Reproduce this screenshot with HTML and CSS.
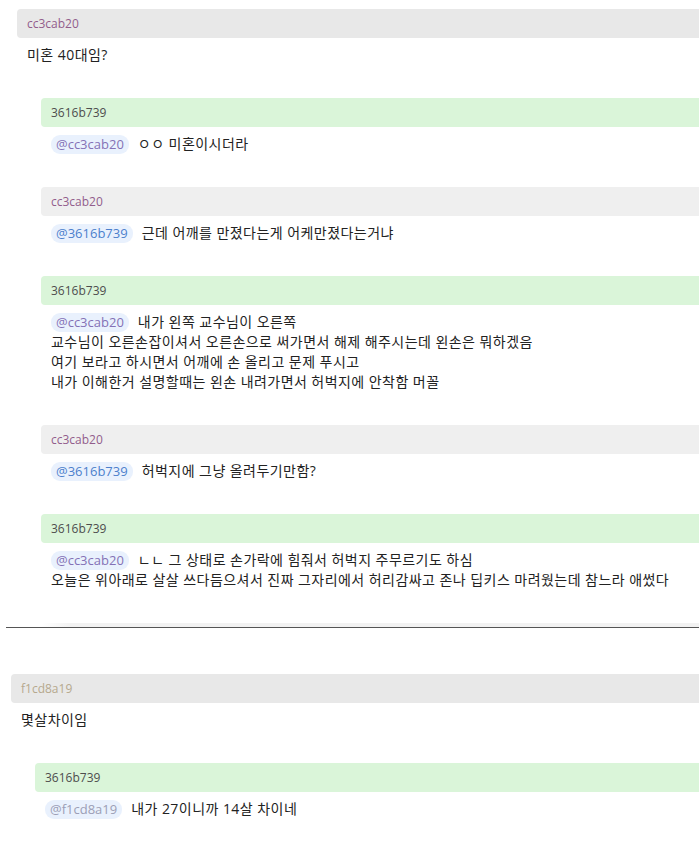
FILE: index.html
```html
<!DOCTYPE html>
<html lang="ko">
<head>
    <meta charset="UTF-8">
    <meta name="viewport" content="width=device-width, initial-scale=1.0">
    <title>댓글</title>
    <link rel="stylesheet" href="styles.css">
</head>
<body>
    <div class="thread thread-cut">
        <div class="comment">
            <div class="comment-head user-c">cc3cab20</div>
            <div class="comment-body">미혼 40대임?</div>
            <div class="replies">
                <div class="comment">
                    <div class="comment-head head-green user-3">3616b739</div>
                    <div class="comment-body"><span class="mention m-c">@cc3cab20</span>ㅇㅇ 미혼이시더라</div>
                </div>
                <div class="comment">
                    <div class="comment-head head-light user-c">cc3cab20</div>
                    <div class="comment-body"><span class="mention m-3">@3616b739</span>근데 어깨를 만졌다는게 어케만졌다는거냐</div>
                </div>
                <div class="comment">
                    <div class="comment-head head-green user-3">3616b739</div>
                    <div class="comment-body"><span class="mention m-c">@cc3cab20</span>내가 왼쪽 교수님이 오른쪽<br>
                        교수님이 오른손잡이셔서 오른손으로 써가면서 해제 해주시는데 왼손은 뭐하겠음<br>
                        여기 보라고 하시면서 어깨에 손 올리고 문제 푸시고<br>
                        내가 이해한거 설명할때는 왼손 내려가면서 허벅지에 안착함 머꼴</div>
                </div>
                <div class="comment">
                    <div class="comment-head head-light user-c">cc3cab20</div>
                    <div class="comment-body"><span class="mention m-3">@3616b739</span>허벅지에 그냥 올려두기만함?</div>
                </div>
                <div class="comment">
                    <div class="comment-head head-green user-3">3616b739</div>
                    <div class="comment-body"><span class="mention m-c">@cc3cab20</span>ㄴㄴ 그 상태로 손가락에 힘줘서 허벅지 주무르기도 하심<br>
                        오늘은 위아래로 살살 쓰다듬으셔서 진짜 그자리에서 허리감싸고 존나 딥키스 마려웠는데 참느라 애썼다</div>
                </div>
                <div class="comment">
                    <div class="comment-head head-fade"></div>
                </div>
            </div>
        </div>
    </div>

    <hr class="divider">

    <div class="thread thread-second">
        <div class="comment">
            <div class="comment-head user-f">f1cd8a19</div>
            <div class="comment-body">몇살차이임</div>
            <div class="replies">
                <div class="comment">
                    <div class="comment-head head-green user-3">3616b739</div>
                    <div class="comment-body"><span class="mention m-f">@f1cd8a19</span>내가 27이니까 14살 차이네</div>
                </div>
            </div>
        </div>
    </div>
</body>
</html>
```

FILE: styles.css
```css
body {
    margin: 0;
    background-color: #ffffff;
    color: #222222;
    font-family: "Open Sans", "Noto Sans CJK KR", sans-serif;
    overflow: hidden;
}
.thread {
    padding-left: 17px;
}
.thread-cut {
    padding-top: 9px;
    height: 618px;
    overflow: hidden;
}
.thread-second {
    padding-top: 46px;
    padding-left: 11px;
}
.comment-head {
    height: 29px;
    line-height: 29px;
    padding-left: 10px;
    font-size: 12px;
    background-color: #e8e8e8;
    border-radius: 4px 0 0 4px;
}
.head-green {
    background-color: #daf5d9;
}
.head-light {
    background-color: #efefef;
}
.head-fade {
    background: linear-gradient(to right, #ffffff, #f2f2f2 30px);
}
.comment-body {
    padding: 7px 10px 0 10px;
    font-size: 14px;
    letter-spacing: 0.45px;
    line-height: 20px;
    margin-bottom: 33px;
}
.replies {
    margin-left: 24px;
}
.user-c {
    color: #925d8c;
}
.user-3 {
    color: #4d4d4d;
}
.user-f {
    color: #b6a88e;
}
.mention {
    display: inline-block;
    padding: 0 5px;
    margin-right: 9px;
    height: 19px;
    line-height: 19px;
    font-size: 13px;
    letter-spacing: 0;
    border-radius: 9px;
    background-color: #e9f1fd;
}
.m-c {
    color: #8471b6;
}
.m-3 {
    color: #4c80cc;
}
.m-f {
    color: #9c9fb6;
}
.divider {
    margin: 0 0 0 6px;
    border: 0;
    border-top: 1px solid #555555;
}
```
